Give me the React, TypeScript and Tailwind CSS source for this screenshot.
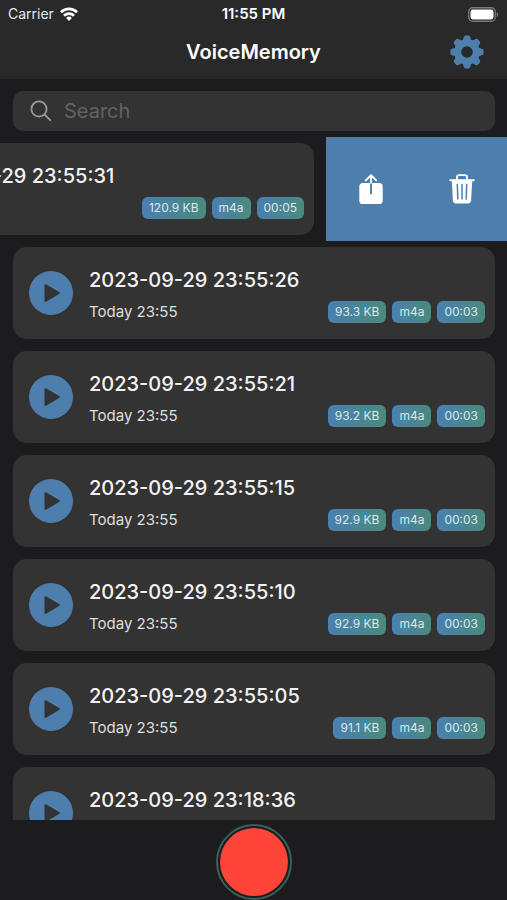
import { useState } from 'react'

type Memo = {
  title: string
  date: string
  size: string
  format: string
  duration: string
}

const memos: Memo[] = [
  { title: '2023-09-29 23:55:31', date: 'Today 23:55', size: '120.9 KB', format: 'm4a', duration: '00:05' },
  { title: '2023-09-29 23:55:26', date: 'Today 23:55', size: '93.3 KB', format: 'm4a', duration: '00:03' },
  { title: '2023-09-29 23:55:21', date: 'Today 23:55', size: '93.2 KB', format: 'm4a', duration: '00:03' },
  { title: '2023-09-29 23:55:15', date: 'Today 23:55', size: '92.9 KB', format: 'm4a', duration: '00:03' },
  { title: '2023-09-29 23:55:10', date: 'Today 23:55', size: '92.9 KB', format: 'm4a', duration: '00:03' },
  { title: '2023-09-29 23:55:05', date: 'Today 23:55', size: '91.1 KB', format: 'm4a', duration: '00:03' },
  { title: '2023-09-29 23:18:36', date: 'Today 23:18', size: '88.4 KB', format: 'm4a', duration: '00:03' }
]

function WifiIcon() {
  return (
    <svg viewBox="0 0 18 14" className="h-[14px] w-[18px]" fill="none" stroke="#fff" strokeWidth="2.7">
      <path d="M1 5.2a11.4 11.4 0 0 1 16 0" />
      <path d="M4 8.7a7.1 7.1 0 0 1 10 0" />
      <path d="M9 14 6.1 11a4.1 4.1 0 0 1 5.8 0Z" fill="#fff" stroke="none" />
    </svg>
  )
}

function BatteryIcon() {
  return (
    <svg viewBox="0 0 31 15" className="h-[15px] w-[31px]">
      <rect x="0.75" y="0.75" width="26.5" height="13.5" rx="4" fill="none" stroke="#7b7b7b" strokeWidth="1.3" />
      <rect x="2.5" y="2.5" width="23" height="10" rx="2.4" fill="#fff" />
      <path d="M28.7 5.2c2.1.8 2.1 3.8 0 4.6Z" fill="#7b7b7b" />
    </svg>
  )
}

function GearIcon() {
  return (
    <svg viewBox="-17 -17 34 34" className="size-[34px]" fill="currentColor">
      <path
        fillRule="evenodd"
        d="M0-12.9a12.9 12.9 0 1 0 0 25.8a12.9 12.9 0 1 0 0-25.8ZM0-5.8a5.8 5.8 0 1 1 0 11.6a5.8 5.8 0 1 1 0-11.6Z"
      />
      {[0, 45, 90, 135, 180, 225, 270, 315].map((angle) => (
        <path key={angle} transform={`rotate(${angle})`} d="M-4.2-11 -3.3-15Q-2.9-16.6-1.4-16.6H1.4Q2.9-16.6 3.3-15L4.2-11Z" />
      ))}
    </svg>
  )
}

function SearchIcon() {
  return (
    <svg viewBox="0 0 22 22" className="size-[22px] shrink-0" fill="none" stroke="#9b9b9b" strokeWidth="1.8" strokeLinecap="round">
      <circle cx="9" cy="9" r="7.6" />
      <path d="m14.6 14.6 5.6 5.6" />
    </svg>
  )
}

function ShareIcon() {
  return (
    <svg viewBox="0 0 24 30" className="h-[30px] w-[24px]" fill="none" strokeLinecap="round" strokeLinejoin="round">
      <rect x="0.3" y="9" width="23.4" height="21" rx="3.6" fill="#fff" />
      <path d="M12 8.6v11" stroke="#4e7fac" strokeWidth="2" />
      <path d="M12 8.8V1.2M6.8 6.4 12 1.2l5.2 5.2" stroke="#fff" strokeWidth="1.9" />
    </svg>
  )
}

function TrashIcon() {
  return (
    <svg viewBox="0 0 26 30" className="h-[30px] w-[26px]" fill="none" strokeLinecap="round" strokeLinejoin="round">
      <path d="M2.8 7h20.4l-1.1 19.6q-.2 2.8-3 2.8H6.9q-2.8 0-3-2.8Z" fill="#fff" />
      <path d="M1.2 6.2h23.6M8 6V3.4Q8 1.1 10.3 1.1h5.4Q18 1.1 18 3.4V6" stroke="#fff" strokeWidth="1.9" />
      <path d="m8.3 10.4.5 14.6M13 10.4V25M17.7 10.4 17.2 25" stroke="#4e7fac" strokeWidth="1.5" />
    </svg>
  )
}

function Badge({ children }: { children: string }) {
  return (
    <span className="flex h-[22px] items-center rounded-md bg-linear-to-r from-[#4a7fb0] to-[#4a8a7c] px-[7px] text-[12px] leading-4 text-[#dbe8ee]">
      {children}
    </span>
  )
}

function MemoCard({ memo }: { memo: Memo }) {
  return (
    <div className="w-full shrink-0 py-1.5 pr-3 pl-[13px]">
      <article className="flex items-center gap-4 rounded-[14px] bg-[#333333] pr-2.5 pl-4">
        <button type="button" aria-label={`Play ${memo.title}`} className="size-11 shrink-0 rounded-full bg-[#4e7fac]">
          <svg viewBox="0 0 44 44" className="size-11" fill="#333333" stroke="#333333" strokeWidth="2" strokeLinejoin="round">
            <path d="M16.5 14.2v15.6L30 22Z" />
          </svg>
        </button>
        <div className="min-w-0 flex-1 pt-[21px] pb-4">
          <h2 className="text-[20px] leading-6 font-medium whitespace-nowrap text-[#f2f2f2]">{memo.title}</h2>
          <div className="mt-[9px] flex items-center justify-between">
            <p className="text-[15px] leading-[22px] text-[#dedede]">{memo.date}</p>
            <div className="flex gap-1.5">
              <Badge>{memo.size}</Badge>
              <Badge>{memo.format}</Badge>
              <Badge>{memo.duration}</Badge>
            </div>
          </div>
        </div>
      </article>
    </div>
  )
}

export default function App() {
  const [query, setQuery] = useState('')
  const [swiped] = useState(0)

  const visible = memos.filter((memo) => memo.title.includes(query))

  return (
    <div className="flex h-screen flex-col bg-[#1c1c1e] font-[Inter,sans-serif] text-white">
      <header className="bg-[#292929]">
        {/* Status bar */}
        <div className="grid h-7 grid-cols-3 items-center px-2 text-[14px] leading-5">
          <div className="flex items-center gap-1.5 text-[#e6e6e6]">
            Carrier
            <WifiIcon />
          </div>
          <div className="text-center text-[15px] font-semibold">11:55 PM</div>
          <div className="flex justify-end">
            <BatteryIcon />
          </div>
        </div>

        {/* Navigation bar */}
        <div className="grid h-[51px] grid-cols-[1fr_auto_1fr] items-center px-[23px] pb-1">
          <h1 className="col-start-2 text-[20px] leading-6 font-semibold">VoiceMemory</h1>
          <button type="button" aria-label="Settings" className="justify-self-end text-[#4e7fac]">
            <GearIcon />
          </button>
        </div>
      </header>

      <main className="min-h-0 flex-1 overflow-hidden">
        <div className="pt-3 pr-3 pb-1.5 pl-[13px]">
          <label className="flex h-10 items-center gap-3 rounded-[10px] bg-[#333333] pr-3 pl-[17px]">
            <SearchIcon />
            <input
              type="text"
              aria-label="Search"
              placeholder="Search"
              value={query}
              onChange={(e) => setQuery(e.target.value)}
              className="min-w-0 flex-1 bg-transparent text-[20px] leading-6 outline-none placeholder:text-[#626262]"
            />
          </label>
        </div>

        <ul>
          {visible.map((memo, index) => (
            <li key={memo.title} className="flex justify-end overflow-hidden">
              <MemoCard memo={memo} />
              {index === swiped && (
                <div className="grid w-[181px] shrink-0 grid-cols-2 bg-[#4e7fac]">
                  <button type="button" aria-label="Share" className="flex items-center justify-center">
                    <ShareIcon />
                  </button>
                  <button type="button" aria-label="Delete" className="flex items-center justify-center">
                    <TrashIcon />
                  </button>
                </div>
              )}
            </li>
          ))}
        </ul>
      </main>

      <footer className="flex h-20 shrink-0 items-end justify-center">
        <button type="button" aria-label="Record" className="size-19 rounded-full border-2 border-[#376259] p-0.5">
          <span className="block size-full rounded-full bg-[#ff453a]" />
        </button>
      </footer>
    </div>
  )
}
